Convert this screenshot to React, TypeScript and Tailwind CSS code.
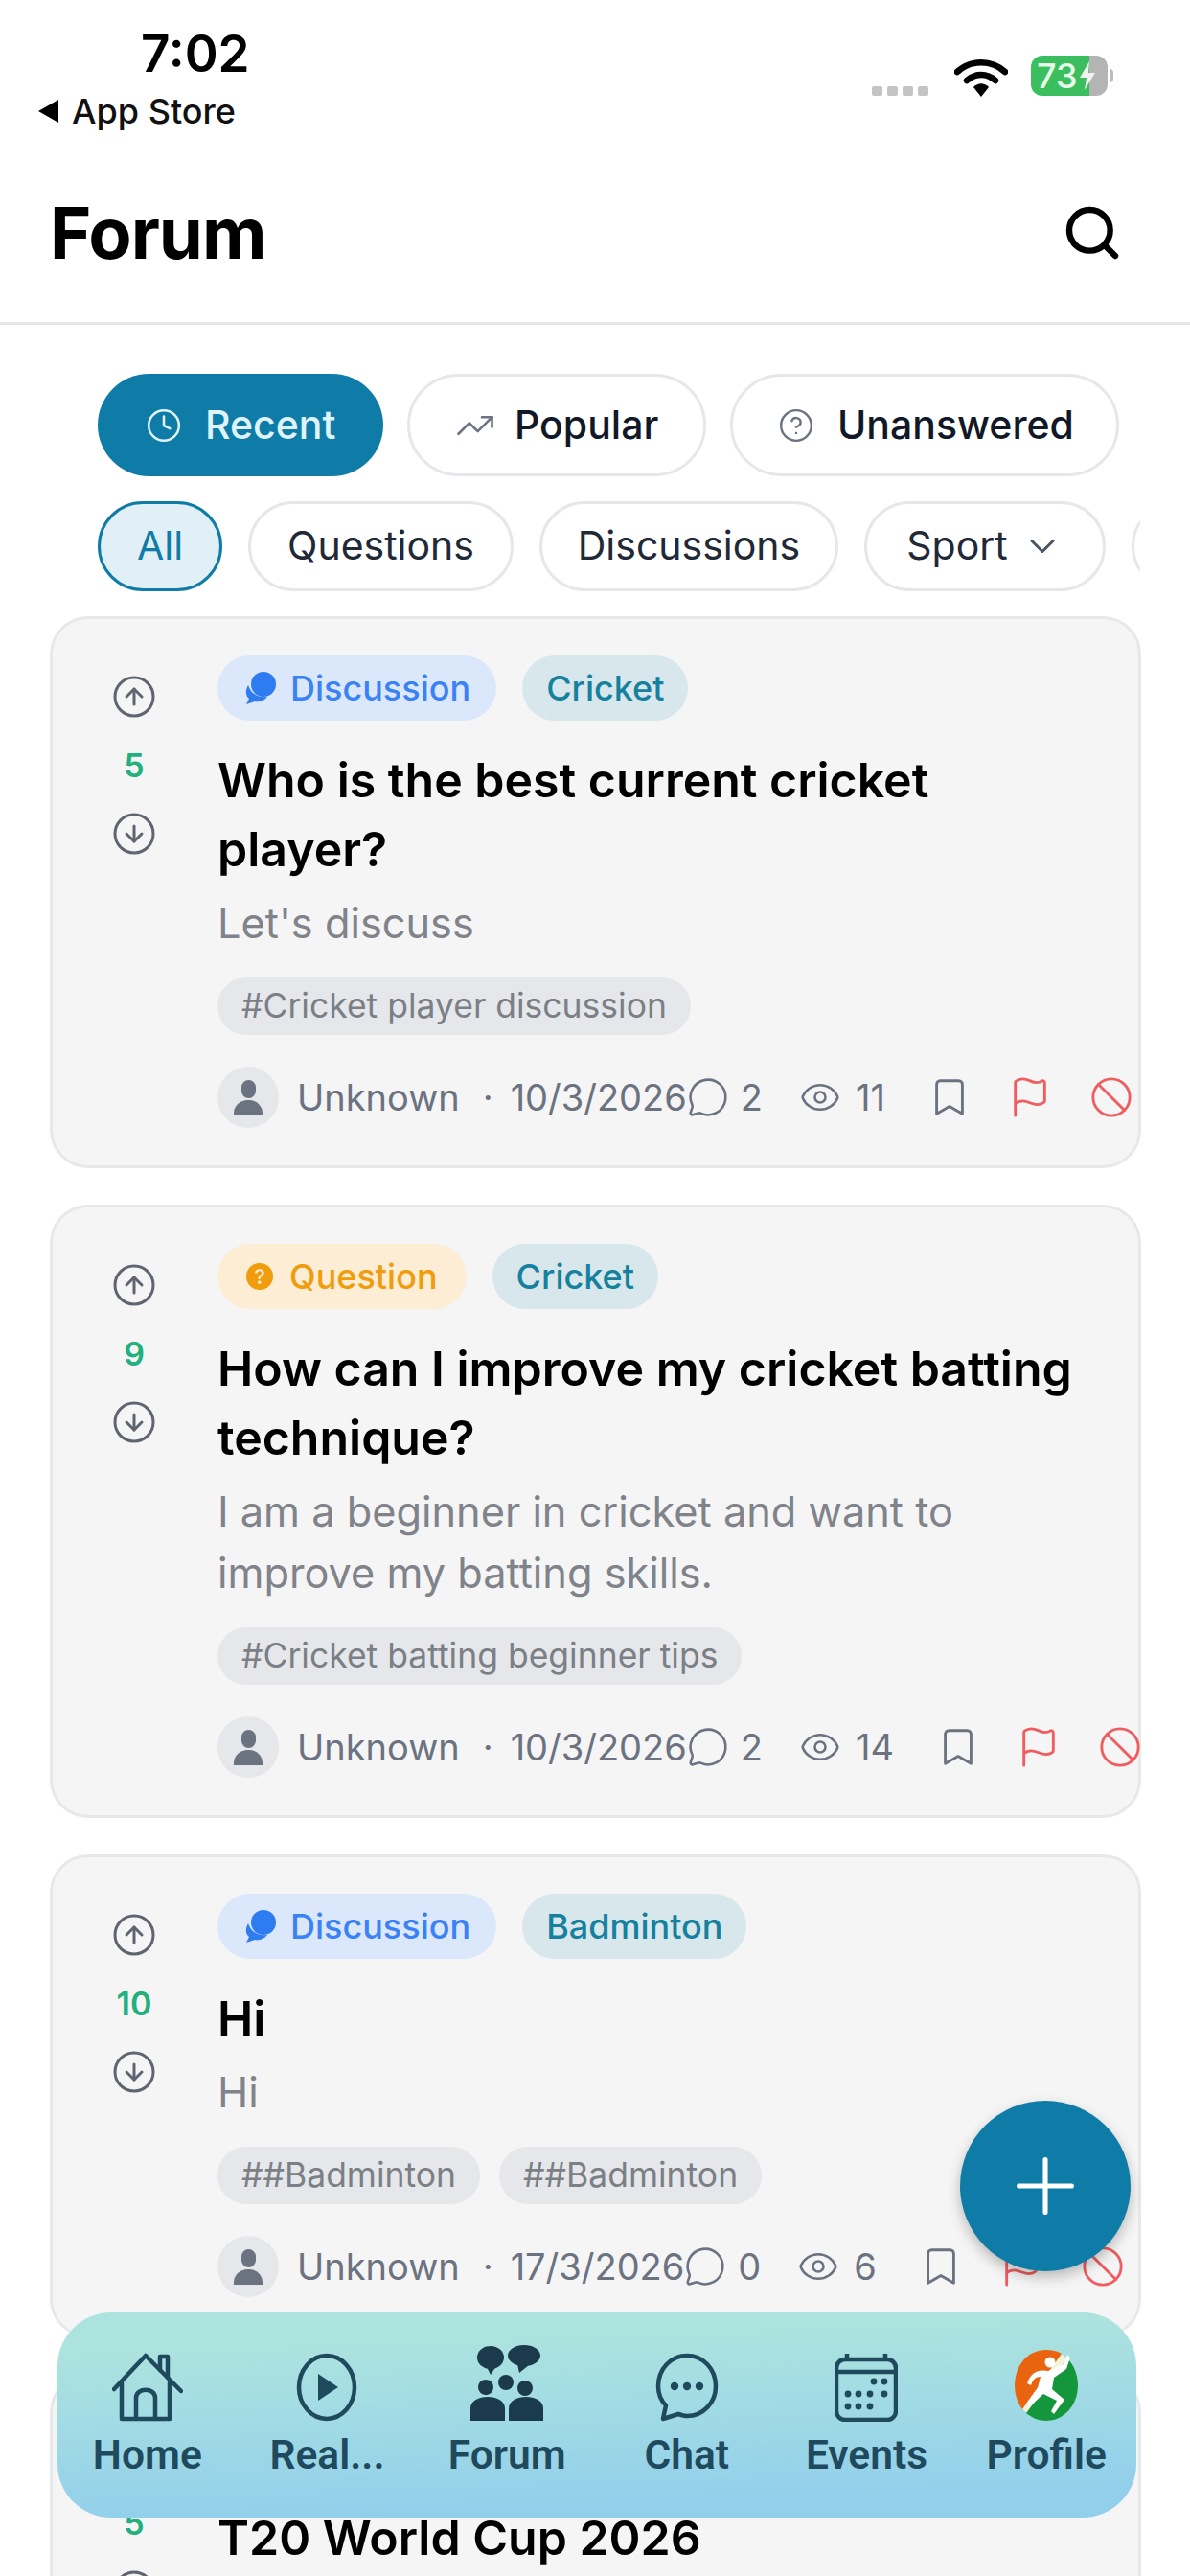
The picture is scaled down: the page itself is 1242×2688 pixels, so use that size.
import React from "react";
import {
  Ban,
  Bookmark,
  ChevronDown,
  CircleArrowDown,
  CircleArrowUp,
  CircleHelp,
  Clock,
  Eye,
  Flag,
  MessageCircle,
  Plus,
  Search,
  TrendingUp,
} from "lucide-react";
import { BsQuestionCircleFill } from "react-icons/bs";

interface Post {
  kind?: "Discussion" | "Question";
  sport?: string;
  votes: number;
  title: string[];
  body: string[];
  hashtags: string[];
  date?: string;
  comments?: number;
  views?: number;
}

const posts: Post[] = [
  {
    kind: "Discussion",
    sport: "Cricket",
    votes: 5,
    title: ["Who is the best current cricket", "player?"],
    body: ["Let's discuss"],
    hashtags: ["#Cricket player discussion"],
    date: "10/3/2026",
    comments: 2,
    views: 11,
  },
  {
    kind: "Question",
    sport: "Cricket",
    votes: 9,
    title: ["How can I improve my cricket batting", "technique?"],
    body: ["I am a beginner in cricket and want to", "improve my batting skills."],
    hashtags: ["#Cricket batting beginner tips"],
    date: "10/3/2026",
    comments: 2,
    views: 14,
  },
  {
    kind: "Discussion",
    sport: "Badminton",
    votes: 10,
    title: ["Hi"],
    body: ["Hi"],
    hashtags: ["##Badminton", "##Badminton"],
    date: "17/3/2026",
    comments: 0,
    views: 6,
  },
  {
    votes: 5,
    title: ["T20 World Cup 2026"],
    body: [],
    hashtags: [],
  },
];

function StatusBar() {
  return (
    <div className="flex h-[150px] justify-between">
      <div className="flex flex-col pl-[40px] pt-[28px]">
        <span className="pl-[107px] text-[53px] leading-[56px] font-semibold text-black">7:02</span>
        <div className="mt-[12px] flex items-center gap-[14px]">
          <span className="h-0 w-0 border-y-[12px] border-r-[21px] border-y-transparent border-r-black" />
          <span className="text-[36px] leading-[40px] font-medium text-[#111]">App Store</span>
        </div>
      </div>
      <div className="flex items-start pr-[80px] pt-[58px]">
        <div className="mt-[32px] flex gap-[5px]">
          {[0, 1, 2, 3].map((i) => (
            <span key={i} className="h-[10px] w-[11px] rounded-[2px] bg-[#c4c4c4]" />
          ))}
        </div>
        <svg className="ml-[27px] mt-[4px]" width="56" height="40" viewBox="0 0 56 40">
          <path d="M3 13 C17 0 39 0 53 13" fill="none" stroke="#000" strokeWidth="6.5" strokeLinecap="round" />
          <path d="M13 22 C22 14 34 14 43 22" fill="none" stroke="#000" strokeWidth="6.5" strokeLinecap="round" />
          <path d="M20 29 C25 24 31 24 36 29 L28 39 Z" fill="#000" />
        </svg>
        <div className="ml-[24px] flex h-[42px] w-[80px] items-center rounded-[12px] bg-[linear-gradient(90deg,#3bbf5e_76%,#b4b4b4_76%)] pl-[6px] text-[36px] font-medium text-[#e8fbe9]">
          73
          <svg width="18" height="32" viewBox="0 0 18 32" className="ml-[1px]">
            <path d="M11 1 L1 18 H8 L6 31 L17 13 H10 Z" fill="#f2f2f2" />
          </svg>
        </div>
        <span className="ml-[2px] mt-[14px] h-[14px] w-[4px] rounded-r-full bg-[#bcbcbc]" />
      </div>
    </div>
  );
}

function Header() {
  return (
    <div className="flex h-[189px] items-center justify-between border-b-[3px] border-[#e3e5e8] pl-[52px] pr-[70px]">
      <h1 className="text-[74px] leading-none font-bold tracking-[-1px] text-black">Forum</h1>
      <Search className="h-[64px] w-[64px] text-black" strokeWidth={2.4} />
    </div>
  );
}

function SortTabs() {
  return (
    <div className="mt-[51px] flex gap-[25px] pl-[102px]">
      <div className="flex h-[107px] w-[298px] items-center gap-[24px] rounded-full bg-[#0f7ca8] pl-[50px] text-[41px] font-medium text-[#dff3fb]">
        <Clock className="h-[38px] w-[38px]" strokeWidth={1.6} />
        Recent
      </div>
      <div className="flex h-[107px] w-[312px] items-center gap-[20px] rounded-full border-[3px] border-[#e5e7eb] bg-white pl-[47px] text-[41px] font-medium text-[#111827]">
        <TrendingUp className="h-[42px] w-[42px] text-[#6b7280]" strokeWidth={1.5} />
        Popular
      </div>
      <div className="flex h-[107px] w-[406px] items-center gap-[24px] rounded-full border-[3px] border-[#e5e7eb] bg-white pl-[47px] text-[41px] font-medium text-[#111827]">
        <CircleHelp className="h-[38px] w-[38px] text-[#6b7280]" strokeWidth={1.5} />
        Unanswered
      </div>
    </div>
  );
}

function FilterChips() {
  const chip = "flex h-[94px] shrink-0 items-center justify-center rounded-full border-[3px] border-[#e5e7eb] bg-white text-[41px] text-[#1f2937]";
  return (
    <div className="mt-[26px] flex w-[1190px] gap-[27px] overflow-hidden pl-[102px]">
      <div className="flex h-[94px] w-[130px] shrink-0 items-center justify-center rounded-full border-[3px] border-[#0f7ca8] bg-[#e0f0f6] text-[41px] text-[#0f7ca8]">
        All
      </div>
      <div className={`${chip} w-[277px]`}>Questions</div>
      <div className={`${chip} w-[312px]`}>Discussions</div>
      <div className={`${chip} w-[252px] gap-[14px]`}>
        Sport
        <ChevronDown className="h-[44px] w-[44px] text-[#4b5563]" strokeWidth={1.6} />
      </div>
      <div className={`${chip} w-[200px]`} />
    </div>
  );
}

function DiscussionGlyph() {
  return (
    <svg width="36" height="36" viewBox="0 0 36 36" fill="#2f7bf0">
      <circle cx="21" cy="14" r="13" />
      <path d="M5 15 C2 20 2 26 6 29 L3 35 L12 32 C17 33 22 31 25 27 C15 28 8 24 5 15 Z" />
    </svg>
  );
}

function KindBadge({ kind }: { kind: Post["kind"] }) {
  if (kind === "Question") {
    return (
      <span className="flex h-[68px] items-center gap-[17px] rounded-full bg-[#fcedd4] px-[30px] text-[36px] font-medium text-[#f09c0c]">
        <BsQuestionCircleFill className="h-[28px] w-[28px]" />
        Question
      </span>
    );
  }
  return (
    <span className="flex h-[68px] items-center gap-[13px] rounded-full bg-[#dbe7fb] px-[27px] text-[36px] font-medium text-[#3b82f6]">
      <DiscussionGlyph />
      Discussion
    </span>
  );
}

function PostCard({ post }: { post: Post }) {
  return (
    <div className="flex rounded-[40px] border-[3px] border-[#e7e8ea] bg-[#f5f5f6] pb-[39px] pl-[53px] pr-0 pt-[38px]">
      <div className="flex w-[64px] shrink-0 flex-col items-center pt-[19px]">
        <CircleArrowUp className="h-[48px] w-[48px] text-[#5f6570]" strokeWidth={1.5} />
        <span className="mt-[23px] text-[34px] leading-[50px] font-semibold text-[#22b07d]">{post.votes}</span>
        <CircleArrowDown className="mt-[22px] h-[48px] w-[48px] text-[#5f6570]" strokeWidth={1.5} />
      </div>
      <div className="ml-[55px] min-w-0 flex-1">
        <div className="flex min-h-[68px] gap-[27px]">
          {post.kind && <KindBadge kind={post.kind} />}
          {post.sport && (
            <span className="flex h-[68px] items-center rounded-full bg-[#d7e7ec] px-[25px] text-[36px] font-medium text-[#16809f]">
              {post.sport}
            </span>
          )}
        </div>
        <div className="mt-[26px] text-[50px] leading-[72px] font-semibold text-black">
          {post.title.map((line) => (
            <div key={line}>{line}</div>
          ))}
        </div>
        {post.body.length > 0 && (
          <div className="mt-[9px] text-[43.3px] leading-[64px] text-[#808389]">
            {post.body.map((line) => (
              <div key={line}>{line}</div>
            ))}
          </div>
        )}
        {post.hashtags.length > 0 && (
          <div className="mt-[25px] flex gap-[20px]">
            {post.hashtags.map((tag, i) => (
              <span key={i} className="flex h-[60px] items-center rounded-full bg-[#e5e7ea] px-[25px] text-[35.5px] text-[#7b7f86]">
                {tag}
              </span>
            ))}
          </div>
        )}
        {post.date && (
          <div className="mt-[33px] flex h-[64px] items-center text-[38px] text-[#6b7280]">
            <span className="flex h-[64px] w-[64px] shrink-0 flex-col items-center justify-center rounded-full bg-[#e5e7ea]">
              <span className="h-[19px] w-[15px] rounded-full bg-[#6b7280]" />
              <span className="mt-[2px] h-[16px] w-[30px] rounded-t-[14px] bg-[#6b7280]" />
            </span>
            <span className="ml-[19px]">Unknown</span>
            <span className="ml-[24px]">·</span>
            <span className="ml-[18px]">{post.date}</span>
            <MessageCircle className="h-[44px] w-[44px] shrink-0" strokeWidth={1.4} />
            <span className="ml-[12px]">{post.comments}</span>
            <Eye className="ml-[38px] h-[44px] w-[44px] shrink-0" strokeWidth={1.4} />
            <span className="ml-[15px]">{post.views}</span>
            <Bookmark className="ml-[44px] h-[46px] w-[46px] shrink-0" strokeWidth={1.5} />
            <Flag className="ml-[38px] h-[46px] w-[46px] shrink-0 text-[#ef5d60]" strokeWidth={1.5} />
            <Ban className="ml-[39px] h-[46px] w-[46px] shrink-0 text-[#ef5d60]" strokeWidth={1.5} />
          </div>
        )}
      </div>
    </div>
  );
}

function HomeIcon() {
  return (
    <svg width="74" height="72" viewBox="0 0 74 72" fill="none" stroke="#1f4a5e" strokeWidth="4.5" strokeLinejoin="round" strokeLinecap="round">
      <path d="M2 38 L35 3 L72 40" />
      <path d="M50 18 V4 H58 V26" />
      <path d="M10 31 V69 H60 V31" />
      <path d="M25 69 V47 C25 36 45 36 45 47 V69" />
    </svg>
  );
}

function ReelIcon() {
  return (
    <svg width="64" height="72" viewBox="0 0 64 72">
      <ellipse cx="32" cy="36" rx="29" ry="33" fill="none" stroke="#1f4a5e" strokeWidth="4.5" />
      <path d="M23 22 L44 36 L23 50 Z" fill="#1f4a5e" />
    </svg>
  );
}

function ForumIcon() {
  return (
    <svg width="78" height="80" viewBox="0 0 78 80" fill="#1b3a4b">
      <ellipse cx="22" cy="13" rx="14" ry="12" />
      <path d="M18 23 L22 31 L28 22 Z" />
      <ellipse cx="57" cy="11" rx="17" ry="11" />
      <path d="M50 20 L52 29 L62 21 Z" />
      <circle cx="17" cy="44" r="8" />
      <circle cx="38" cy="39" r="8" />
      <circle cx="58" cy="45" r="8" />
      <path d="M1 79 V66 C1 50 37 50 37 66 V79 Z" />
      <path d="M41 79 V66 C41 50 77 50 77 66 V79 Z" />
    </svg>
  );
}

function ChatIcon() {
  return (
    <svg width="66" height="72" viewBox="0 0 66 72">
      <path
        d="M33 3 C16 3 3 17 3 35 C3 43 6 50 11 55 L8 69 L24 64 C27 65 30 66 33 66 C50 66 63 52 63 35 C63 17 50 3 33 3 Z"
        fill="none"
        stroke="#1f4a5e"
        strokeWidth="4.5"
        strokeLinejoin="round"
      />
      <circle cx="20" cy="35" r="4.2" fill="#1f4a5e" />
      <circle cx="33" cy="35" r="4.2" fill="#1f4a5e" />
      <circle cx="46" cy="35" r="4.2" fill="#1f4a5e" />
    </svg>
  );
}

function EventsIcon() {
  return (
    <svg width="66" height="72" viewBox="0 0 66 72" fill="none" stroke="#1f4a5e" strokeWidth="4.5">
      <rect x="2" y="7" width="62" height="63" rx="9" />
      <path d="M2 20 H64" />
      <path d="M13 7 V1 M53 7 V1" />
      <g fill="#1f4a5e" stroke="none">
        {[
          [41, 30], [52, 30],
          [14, 43], [25, 43], [37, 43], [52, 43],
          [14, 56], [25, 56], [37, 56],
        ].map(([x, y]) => (
          <circle key={`${x}-${y}`} cx={x} cy={y} r="3.4" />
        ))}
      </g>
    </svg>
  );
}

function ProfileLogo() {
  return (
    <svg width="70" height="76" viewBox="0 0 68 76">
      <ellipse cx="34" cy="38" rx="33" ry="37" fill="#f4f2d8" />
      <path d="M34 1 C14 1 1 18 1 38 C1 48 4 56 9 63 L50 5 C45 2 40 1 34 1 Z" fill="#e8640f" />
      <path d="M56 10 C63 17 67 27 67 38 C67 59 52 75 34 75 C26 75 19 72 13 67 Z" fill="#14963c" />
      <circle cx="38" cy="14" r="5.5" fill="#fff" />
      <path d="M14 36 C18 24 26 21 36 23 L52 16 L56 6 L59 9 L55 21 L42 30 L40 42 L53 53 L42 68 L39 65 L45 54 L31 47 L17 60 L13 57 L25 41 L28 29 C23 29 20 32 18 38 Z" fill="#fff" />
    </svg>
  );
}

const tabs: { label: string; icon: React.ReactNode }[] = [
  { label: "Home", icon: <HomeIcon /> },
  { label: "Real...", icon: <ReelIcon /> },
  { label: "Forum", icon: <ForumIcon /> },
  { label: "Chat", icon: <ChatIcon /> },
  { label: "Events", icon: <EventsIcon /> },
  { label: "Profile", icon: <ProfileLogo /> },
];

function TabBar() {
  return (
    <div className="absolute left-[60px] top-[2413px] grid h-[214px] w-[1126px] grid-cols-6 rounded-[56px] bg-[linear-gradient(178deg,#ace3df_18%,#92cfeb_88%)]">
      {tabs.map((tab) => (
        <div key={tab.label} className="flex flex-col items-center pt-[18px]">
          <div className="flex h-[96px] items-end justify-center">{tab.icon}</div>
          <span className="mt-[13px] font-['Roboto',sans-serif] text-[42.5px] leading-[44px] font-semibold text-[#1f4a5e]">
            {tab.label}
          </span>
        </div>
      ))}
    </div>
  );
}

export default function App() {
  return (
    <div className="relative h-[2688px] w-[1242px] overflow-hidden bg-white font-['Inter',sans-serif]">
      <StatusBar />
      <Header />
      <SortTabs />
      <FilterChips />
      <div className="ml-[52px] mt-[26px] flex w-[1139px] flex-col gap-[38px]">
        {posts.map((post) => (
          <PostCard key={post.title[0]} post={post} />
        ))}
      </div>
      <button className="absolute left-[1002px] top-[2192px] flex h-[178px] w-[178px] items-center justify-center rounded-full bg-[#0f7ca8] shadow-[0_6px_14px_rgba(0,0,0,0.25)]">
        <Plus className="h-[94px] w-[94px] text-white" strokeWidth={1.3} />
      </button>
      <TabBar />
    </div>
  );
}
